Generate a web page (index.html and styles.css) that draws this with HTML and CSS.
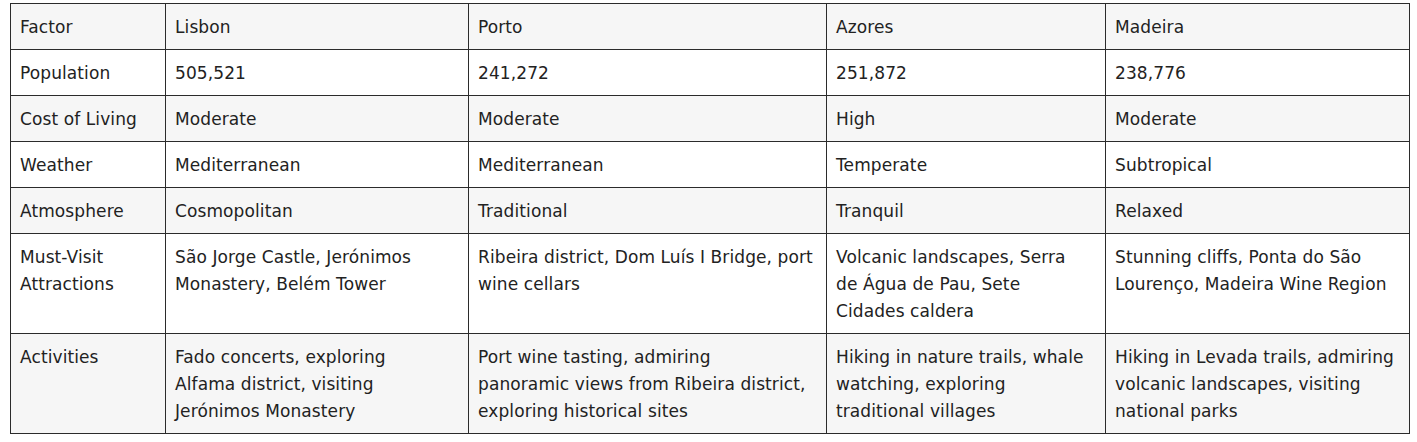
FILE: index.html
```html
<!DOCTYPE html>
<html lang="en">
<head>
<meta charset="utf-8">
<title>Portugal comparison</title>
<link rel="stylesheet" href="styles.css">
</head>
<body>
<table class="compare">
  <colgroup>
    <col class="c-factor">
    <col class="c-lisbon">
    <col class="c-porto">
    <col class="c-azores">
    <col class="c-madeira">
  </colgroup>
  <thead>
    <tr>
      <th>Factor</th>
      <th>Lisbon</th>
      <th>Porto</th>
      <th>Azores</th>
      <th>Madeira</th>
    </tr>
  </thead>
  <tbody>
    <tr>
      <td>Population</td>
      <td>505,521</td>
      <td>241,272</td>
      <td>251,872</td>
      <td>238,776</td>
    </tr>
    <tr>
      <td>Cost of Living</td>
      <td>Moderate</td>
      <td>Moderate</td>
      <td>High</td>
      <td>Moderate</td>
    </tr>
    <tr>
      <td>Weather</td>
      <td>Mediterranean</td>
      <td>Mediterranean</td>
      <td>Temperate</td>
      <td>Subtropical</td>
    </tr>
    <tr>
      <td>Atmosphere</td>
      <td>Cosmopolitan</td>
      <td>Traditional</td>
      <td>Tranquil</td>
      <td>Relaxed</td>
    </tr>
    <tr>
      <td>Must-Visit Attractions</td>
      <td>São Jorge Castle, Jerónimos Monastery, Belém Tower</td>
      <td>Ribeira district, Dom Luís I Bridge, port wine cellars</td>
      <td>Volcanic landscapes, Serra<br>de Água de Pau, Sete<br>Cidades caldera</td>
      <td>Stunning cliffs, Ponta do São Lourenço, Madeira Wine Region</td>
    </tr>
    <tr>
      <td>Activities</td>
      <td>Fado concerts, exploring<br>Alfama district, visiting<br>Jerónimos Monastery</td>
      <td>Port wine tasting, admiring<br>panoramic views from Ribeira district,<br>exploring historical sites</td>
      <td>Hiking in nature trails, whale<br>watching, exploring<br>traditional villages</td>
      <td>Hiking in Levada trails, admiring volcanic landscapes, visiting national parks</td>
    </tr>
  </tbody>
</table>
</body>
</html>
```

FILE: styles.css
```css
html, body {
  margin: 0;
  background: #ffffff;
}
body {
  padding: 3px 8px 0 10px;
  font-family: "DejaVu Sans", "Open Sans", sans-serif;
  color: #222222;
}
.compare {
  width: 1399px;
  border-collapse: collapse;
  table-layout: fixed;
  font-size: 17px;
  line-height: 27px;
  letter-spacing: 0.1px;
}
.c-factor { width: 155px; }
.c-lisbon { width: 303px; }
.c-porto { width: 358px; }
.c-azores { width: 279px; }
.c-madeira { width: 304px; }
.compare th,
.compare td {
  border: 1px solid #2b2b2b;
  padding: 10px 9px 8px 9px;
  text-align: left;
  vertical-align: top;
  font-weight: 400;
}
.compare thead tr {
  background: #f6f6f6;
}
.compare tbody tr:nth-child(even) {
  background: #f6f6f6;
}
```
